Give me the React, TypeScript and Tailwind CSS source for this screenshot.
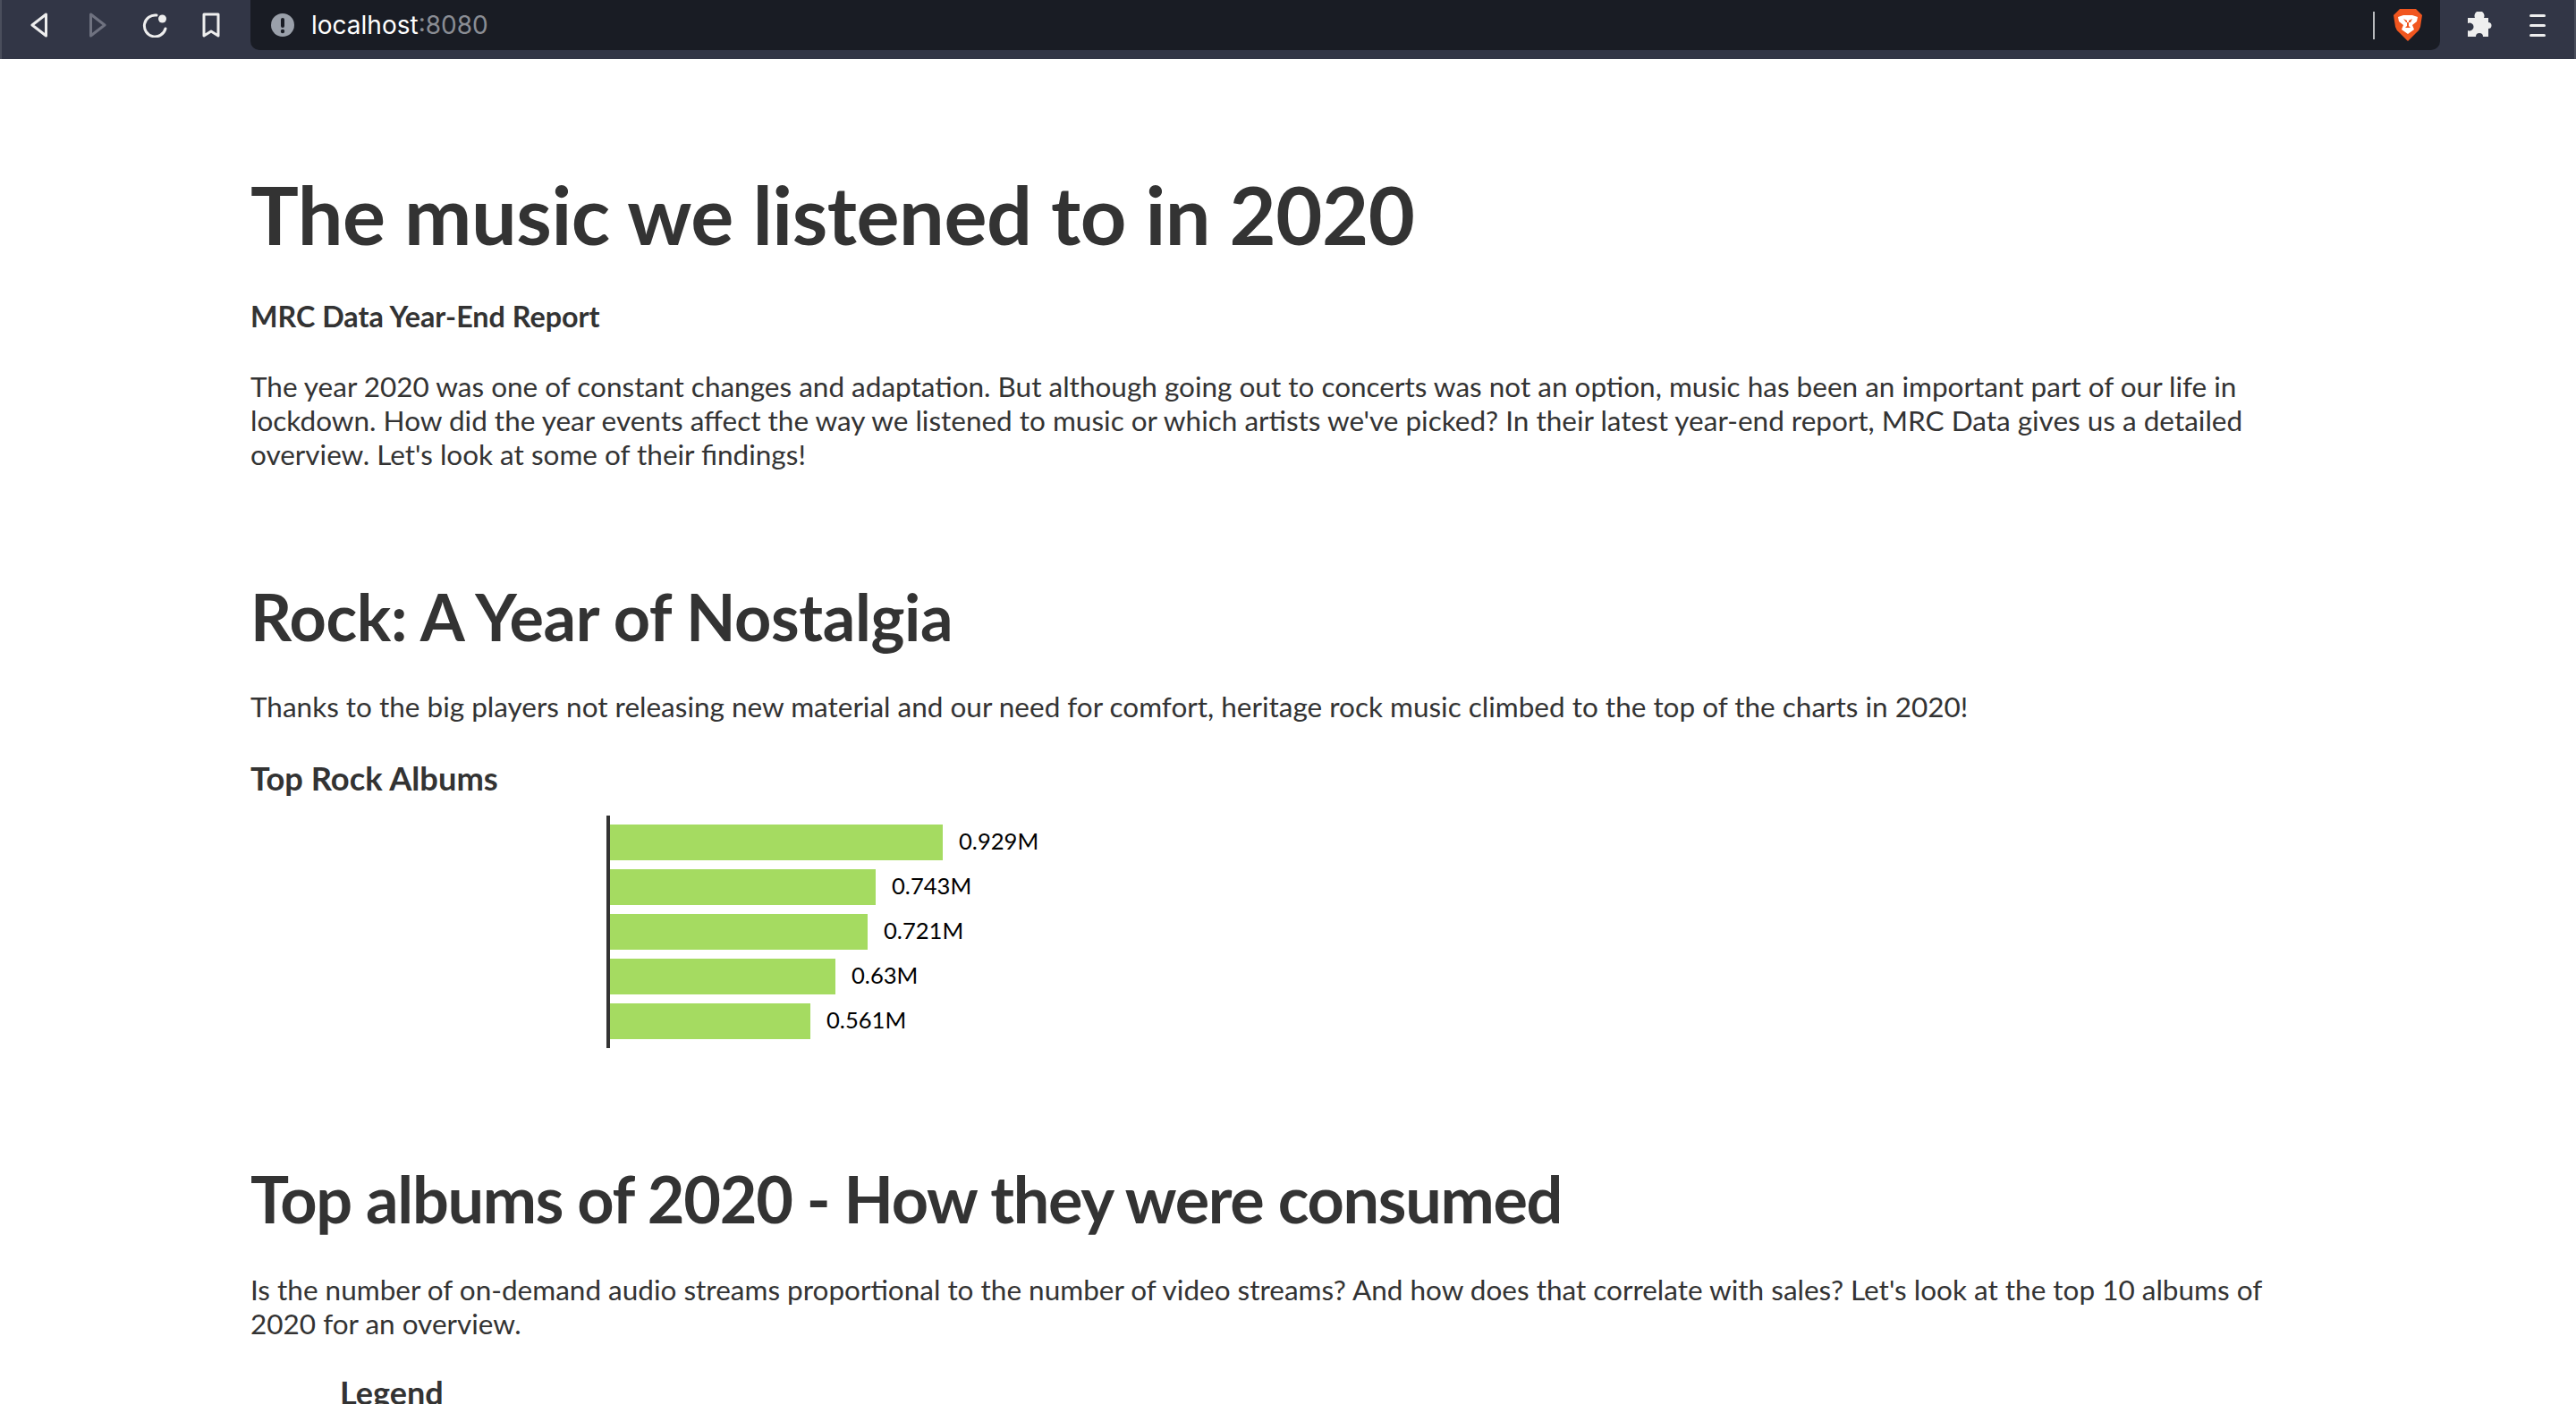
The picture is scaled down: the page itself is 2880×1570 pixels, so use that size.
const albums = [
  { width: 372, label: "0.929M" },
  { width: 297, label: "0.743M" },
  { width: 288, label: "0.721M" },
  { width: 252, label: "0.63M" },
  { width: 224, label: "0.561M" },
];

function BrowserBar() {
  return (
    <div className="flex h-[66px] items-start border-x-2 border-x-[#4a4e5c] bg-[#323646]">
      <div className="flex h-[56px] w-[278px] shrink-0 items-center">
        {/* back, forward, reload, bookmark */}
        <svg className="ml-[32px]" width="20" height="28" viewBox="0 0 20 28" fill="none" stroke="#eeeeee" strokeWidth="3" strokeLinejoin="round">
          <path d="M17.5 2 L2 14 L17.5 26 Z" />
        </svg>
        <svg className="ml-[45px]" width="20" height="28" viewBox="0 0 20 28" fill="none" stroke="#6f7280" strokeWidth="3" strokeLinejoin="round">
          <path d="M2.5 2 L18 14 L2.5 26 Z" />
        </svg>
        <svg className="ml-[40px]" width="28" height="28" viewBox="0 0 28 28" fill="none">
          <path d="M26 18 A12 12 0 1 1 16 3" stroke="#eeeeee" strokeWidth="3" strokeLinecap="round" />
          <circle cx="22.5" cy="7" r="4.5" fill="#eeeeee" />
        </svg>
        <svg className="ml-[39px]" width="20" height="28" viewBox="0 0 20 28" fill="none" stroke="#eeeeee" strokeWidth="3" strokeLinejoin="round">
          <path d="M2 2 H18 V26 L10 21 L2 26 Z" />
        </svg>
      </div>
      <div className="flex h-[56px] w-[2448px] shrink-0 items-center rounded-b-[10px] bg-[#191c24] font-['Inter',sans-serif] text-[28px]">
        <svg className="ml-[23px]" width="26" height="26" viewBox="0 0 26 26">
          <circle cx="13" cy="13" r="13" fill="#9aa0aa" />
          <rect x="11" y="5" width="4" height="11" rx="2" fill="#191c24" />
          <circle cx="13" cy="20" r="2.2" fill="#191c24" />
        </svg>
        <span className="ml-[19px] text-white">localhost</span>
        <span className="text-[#8a8d94]">:8080</span>
        <div className="ml-auto h-[31px] w-[2px] bg-[#b9bbbe]" />
        <svg className="mr-[20px] ml-[21px]" width="32" height="36" viewBox="0 0 32 36">
          <path d="M7 0 H25 L30 5 L32 7 L30 20 Q29 24 25 27 L16 36 L7 27 Q3 24 2 20 L0 7 L2 5 Z" fill="#f1561f" />
          <path d="M5 9 L11 7 H21 L27 9 L26 14 L21 18 L23 23 L16 28 L9 23 L11 18 L6 14 Z" fill="#ffffff" />
          <path d="M11 11 L15 13 L15 19 L13 21 L17 21 L19 21 L17 19 L17 13 L21 11 L19 15 L14 15 Z" fill="#f1561f" />
        </svg>
      </div>
      <div className="flex h-[56px] flex-1 items-center">
        <svg className="ml-[30px]" width="30" height="30" viewBox="0 0 30 30" fill="#eeeeee">
          <path d="M1 7 H9 A5.5 5.5 0 1 1 19 7 H24 V12 A3.5 3.5 0 1 1 24 19 V28 H18 A4 4 0 1 0 10 28 H1 V21 A4.5 4.5 0 1 0 1 13 Z" />
        </svg>
        <div className="ml-[40px] flex w-[18px] flex-col gap-[8px]">
          <div className="h-[3px] rounded-full bg-[#eeeeee]" />
          <div className="h-[3px] rounded-full bg-[#eeeeee]" />
          <div className="h-[3px] rounded-full bg-[#eeeeee]" />
        </div>
      </div>
    </div>
  );
}

function RockChart() {
  return (
    <div className="ml-[398px] mt-[20px] flex h-[260px] w-[600px] flex-col gap-[10px] border-l-[4px] border-l-[#333333] py-[10px]">
      {albums.map((album) => (
        <div key={album.label} className="flex h-[40px] shrink-0 items-center">
          <div className="h-full bg-[#a5db61]" style={{ width: album.width }} />
          <span className="mb-[4px] ml-[18px] text-[25.6px] leading-[36px] text-black">{album.label}</span>
        </div>
      ))}
    </div>
  );
}

export default function App() {
  return (
    <div className="h-[1570px] overflow-hidden bg-white font-['Lato',sans-serif] text-[#333333]">
      <BrowserBar />
      <div className="w-[2600px] pl-[280px] text-[31.5px] leading-[38px]">
        <h1 className="mt-[115px] text-[90px] font-bold leading-[116px] tracking-[-0.45px]">The music we listened to in 2020</h1>
        <h3 className="mt-[38px] text-[32.3px] font-bold">MRC Data Year-End Report</h3>
        <p className="mt-[40px]">
          The year 2020 was one of constant changes and adaptation. But although going out to concerts was not an option, music has been an important part of our life in lockdown. How did the year events affect the way we listened to music or which artists we've picked? In their latest year-end report, MRC Data gives us a detailed overview. Let's look at some of their findings!
        </p>
        <h2 className="mt-[119px] text-[72px] font-bold leading-[86px] tracking-[-0.37px]">Rock: A Year of Nostalgia</h2>
        <p className="mt-[39px]">
          Thanks to the big players not releasing new material and our need for comfort, heritage rock music climbed to the top of the charts in 2020!
        </p>
        <h3 className="mt-[39px] text-[36.3px] font-bold leading-[44px]">Top Rock Albums</h3>
        <RockChart />
        <h2 className="mt-[125px] text-[72px] font-bold leading-[86px] tracking-[-1.3px]">Top albums of 2020 - How they were consumed</h2>
        <p className="mt-[40px]">
          Is the number of on-demand audio streams proportional to the number of video streams? And how does that correlate with sales? Let's look at the top 10 albums of 2020 for an overview.
        </p>
        <h3 className="ml-[100px] mt-[36px] text-[36px] font-bold leading-[44px]">Legend</h3>
      </div>
    </div>
  );
}
